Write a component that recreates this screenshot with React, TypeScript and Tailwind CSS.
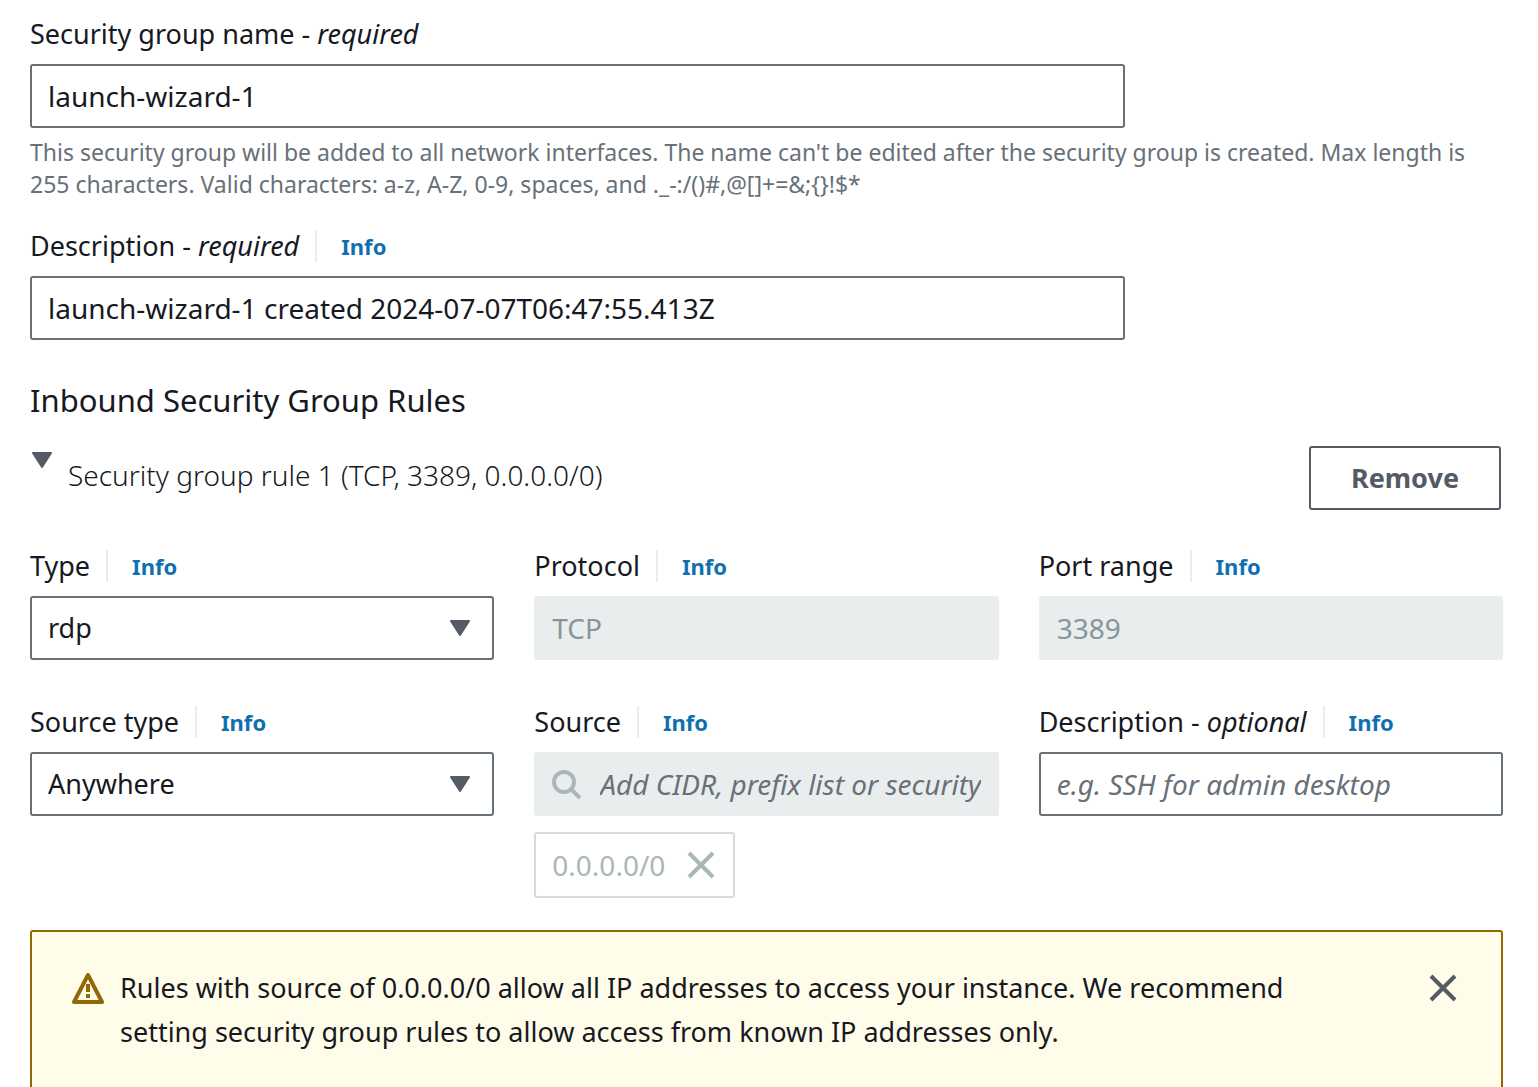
import type { ReactNode } from "react";

const control = "block h-16 w-full rounded-[3px] border-2 px-4 leading-10 outline-none";
const enabled =
  "border-[#687078] bg-white text-[#16191f] placeholder:text-[#687078] placeholder:italic placeholder:opacity-100";
const disabled = "border-[#e9eded] bg-[#e9eded] text-[#879596]";

function Caret({ className }: { className?: string }) {
  return (
    <svg className={className} width="20" height="16" viewBox="0 0 20 16" fill="#545b64" stroke="#545b64" strokeWidth="2" strokeLinejoin="round" aria-hidden="true">
      <path d="M1 1h18L10 15z" />
    </svg>
  );
}

function Cross() {
  return (
    <svg width="32" height="32" viewBox="0 0 32 32" fill="none" stroke="currentColor" strokeWidth="4" aria-hidden="true">
      <path d="M4 4l24 24M28 4L4 28" />
    </svg>
  );
}

function Field({
  id,
  label,
  hint,
  info = true,
  children,
}: {
  id: string;
  label: string;
  hint?: string;
  info?: boolean;
  children: ReactNode;
}) {
  return (
    <div className="min-w-0">
      <div className="mb-2 flex h-11 items-center">
        <label htmlFor={id} className="whitespace-nowrap text-[27px] leading-10">
          {label}
          {hint && (
            <>
              {" - "}
              <em>{hint}</em>
            </>
          )}
        </label>
        {info && (
          <a href="#info" className="ml-4 border-l-2 border-[#eaeded] pl-6 text-[22px] leading-8 font-bold text-[#0f70b0]">
            Info
          </a>
        )}
      </div>
      {children}
    </div>
  );
}

function Select({ id, value }: { id: string; value: string }) {
  return (
    <div className="relative">
      <select id={id} defaultValue={value} className={`appearance-none text-[27px] ${control} ${enabled}`}>
        <option value={value}>{value}</option>
      </select>
      <Caret className="pointer-events-none absolute top-6 right-6" />
    </div>
  );
}

export default function App() {
  return (
    <main className="bg-white pt-3 pr-[35px] pl-[30px] font-['Noto_Sans',sans-serif] text-[#16191f]">
      <div className="grid grid-cols-4 gap-x-10">
        <div className="col-span-3">
          <Field id="group-name" label="Security group name" hint="required" info={false}>
            <input id="group-name" className={`text-[28px] ${control} ${enabled}`} defaultValue="launch-wizard-1" />
          </Field>
        </div>
        <p className="col-span-4 mt-2 mb-6 text-[23px] leading-8 text-[#687078]">
          {"This security group will be added to all network interfaces. The name can't be edited after the security group is created. Max length is 255 characters. Valid characters: a-z, A-Z, 0-9, spaces, and ._-:/()#,@[]+=&;{}!$*"}
        </p>
        <div className="col-span-3">
          <Field id="group-description" label="Description" hint="required">
            <input
              id="group-description"
              className={`text-[28px] ${control} ${enabled}`}
              defaultValue="launch-wizard-1 created 2024-07-07T06:47:55.413Z"
            />
          </Field>
        </div>
      </div>

      <h2 className="mt-10 text-[31px] leading-10">Inbound Security Group Rules</h2>

      <div className="mt-[26px] flex h-16 items-start pr-[2px]">
        <button type="button" className="flex items-start gap-4 text-left text-[28px] leading-[58px] font-light">
          <Caret className="mt-[6px] ml-[2px]" />
          Security group rule 1 (TCP, 3389, 0.0.0.0/0)
        </button>
        <button
          type="button"
          className="ml-auto h-16 rounded-[3px] border-2 border-[#545b64] px-10 text-[27px] leading-10 font-bold text-[#545b64]"
        >
          Remove
        </button>
      </div>

      <div className="mt-[34px] grid grid-cols-3 gap-x-10 gap-y-10">
        <Field id="type" label="Type">
          <Select id="type" value="rdp" />
        </Field>
        <Field id="protocol" label="Protocol">
          <input id="protocol" disabled className={`text-[28px] ${control} ${disabled}`} defaultValue="TCP" />
        </Field>
        <Field id="port" label="Port range">
          <input id="port" disabled className={`text-[28px] ${control} ${disabled}`} defaultValue="3389" />
        </Field>
        <Field id="source-type" label="Source type">
          <Select id="source-type" value="Anywhere" />
        </Field>
        <Field id="source" label="Source">
          <div className="flex h-16 items-center gap-4 rounded-[3px] border-2 border-[#e9eded] bg-[#e9eded] px-4 text-[28px]">
            <svg className="shrink-0" width="32" height="32" viewBox="0 0 32 32" fill="none" stroke="#aab7b8" strokeWidth="4" aria-hidden="true">
              <circle cx="12" cy="14" r="10" />
              <path d="M19 21l9 9" />
            </svg>
            <input
              id="source"
              disabled
              className="h-14 min-w-0 flex-1 bg-transparent leading-10 outline-none placeholder:text-[#687078] placeholder:italic placeholder:opacity-100"
              placeholder="Add CIDR, prefix list or security group"
            />
          </div>
          <div className="mt-4 inline-flex h-[66px] items-center gap-5 rounded-[3px] border-2 border-[#d5dbdb] px-4 text-[28px] leading-10 text-[#aab7b8]">
            0.0.0.0/0
            <button type="button" disabled aria-label="Remove 0.0.0.0/0">
              <Cross />
            </button>
          </div>
        </Field>
        <Field id="rule-description" label="Description" hint="optional">
          <input
            id="rule-description"
            className={`text-[28px] ${control} ${enabled}`}
            placeholder="e.g. SSH for admin desktop"
          />
        </Field>
      </div>

      <div role="alert" className="mt-8 flex items-start gap-4 rounded-[3px] border-2 border-[#906806] bg-[#fffce9] pt-[34px] pr-[42px] pb-10 pl-10">
        <svg className="mt-[6px] shrink-0" width="32" height="32" viewBox="0 0 32 32" fill="none" stroke="#906806" strokeWidth="4" strokeLinejoin="round" aria-hidden="true">
          <path d="M16 3L30 30H2z" />
          <path d="M16 12v8M16 22v4" />
        </svg>
        <p className="flex-1 text-[27px] leading-11">
          Rules with source of 0.0.0.0/0 allow all IP addresses to access your instance. We recommend setting security
          group rules to allow access from known IP addresses only.
        </p>
        <button type="button" aria-label="Dismiss" className="mt-[6px] ml-20 text-[#545b64]">
          <Cross />
        </button>
      </div>
    </main>
  );
}
